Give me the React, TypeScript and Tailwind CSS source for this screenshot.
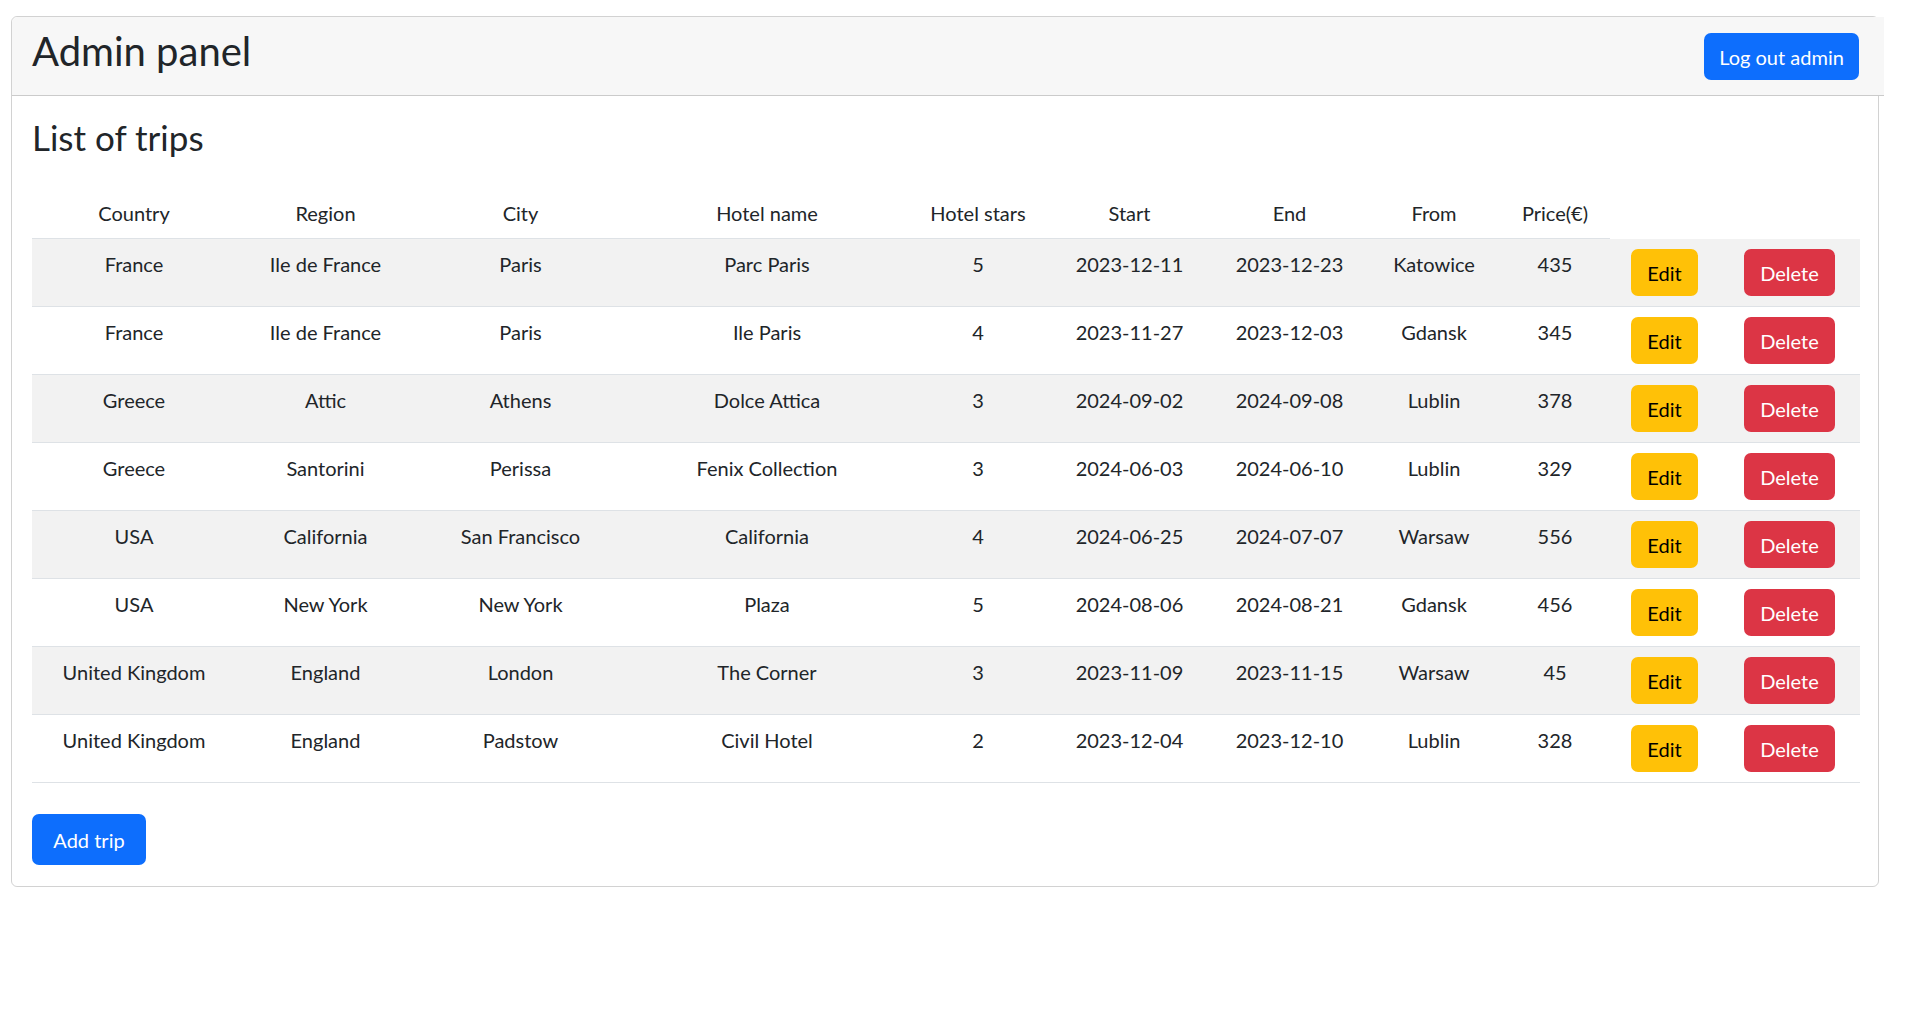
const trips = [
  ['France', 'Ile de France', 'Paris', 'Parc Paris', '5', '2023-12-11', '2023-12-23', 'Katowice', '435'],
  ['France', 'Ile de France', 'Paris', 'Ile Paris', '4', '2023-11-27', '2023-12-03', 'Gdansk', '345'],
  ['Greece', 'Attic', 'Athens', 'Dolce Attica', '3', '2024-09-02', '2024-09-08', 'Lublin', '378'],
  ['Greece', 'Santorini', 'Perissa', 'Fenix Collection', '3', '2024-06-03', '2024-06-10', 'Lublin', '329'],
  ['USA', 'California', 'San Francisco', 'California', '4', '2024-06-25', '2024-07-07', 'Warsaw', '556'],
  ['USA', 'New York', 'New York', 'Plaza', '5', '2024-08-06', '2024-08-21', 'Gdansk', '456'],
  ['United Kingdom', 'England', 'London', 'The Corner', '3', '2023-11-09', '2023-11-15', 'Warsaw', '45'],
  ['United Kingdom', 'England', 'Padstow', 'Civil Hotel', '2', '2023-12-04', '2023-12-10', 'Lublin', '328'],
]

const headers = ['Country', 'Region', 'City', 'Hotel name', 'Hotel stars', 'Start', 'End', 'From', 'Price(€)']

export default function App() {
  return (
    <div className="min-h-screen bg-white font-['Lato',sans-serif] text-[20px] leading-[1.5] text-[#212529] pt-[16px] pl-[11px]">
      <div className="w-[1868px] rounded-[6px] border border-black/[0.175]">
        {/* header sticks out a few px on the right, like the original */}
        <div className="-mr-[6px] flex h-[79px] items-start justify-between rounded-tl-[6px] border-b border-black/[0.175] bg-[#f7f7f7] pl-[20px] pr-[25px]">
          <h1 className="mt-[10px] text-[40px] leading-[1.2] font-normal">Admin panel</h1>
          <button className="mt-[16px] h-[47px] w-[155px] rounded-[7px] bg-[#0d6efd] text-[20px] text-white">
            Log out admin
          </button>
        </div>

        <div className="pl-[20px] pr-[19px] pt-[20px] pb-[21px]">
          <h2 className="text-[35px] leading-[1.2] font-normal">List of trips</h2>

          <table className="mt-[30px] w-[1828px] table-fixed border-separate border-spacing-0 text-center">
            <colgroup>
              <col className="w-[204px]" />
              <col className="w-[179px]" />
              <col className="w-[211px]" />
              <col className="w-[282px]" />
              <col className="w-[140px]" />
              <col className="w-[163px]" />
              <col className="w-[157px]" />
              <col className="w-[132px]" />
              <col className="w-[110px]" />
              <col className="w-[109px]" />
              <col className="w-[141px]" />
            </colgroup>
            <thead>
              <tr>
                {headers.map(h => (
                  <th key={h} className="h-[51px] border-b border-[#dee2e6] px-[8px] pt-[10px] align-top font-normal">
                    {h}
                  </th>
                ))}
              </tr>
            </thead>
            <tbody>
              {trips.map((t, i) => (
                <tr key={i} className={i % 2 === 0 ? 'bg-[#f2f2f2]' : 'bg-white'}>
                  {t.map((v, j) => (
                    <td key={j} className="h-[68px] border-b border-[#dee2e6] px-[8px] pt-[10px] align-top">
                      {v}
                    </td>
                  ))}
                  <td className="h-[68px] border-b border-[#dee2e6] pt-[10px] align-top">
                    <button className="h-[47px] w-[67px] rounded-[7px] bg-[#ffc107] text-black">Edit</button>
                  </td>
                  <td className="h-[68px] border-b border-[#dee2e6] pt-[10px] align-top">
                    <button className="h-[47px] w-[91px] rounded-[7px] bg-[#dc3545] text-white">Delete</button>
                  </td>
                </tr>
              ))}
            </tbody>
          </table>

          <button className="mt-[31px] h-[51px] w-[114px] rounded-[7px] bg-[#0d6efd] text-[20px] text-white">
            Add trip
          </button>
        </div>
      </div>
    </div>
  )
}
